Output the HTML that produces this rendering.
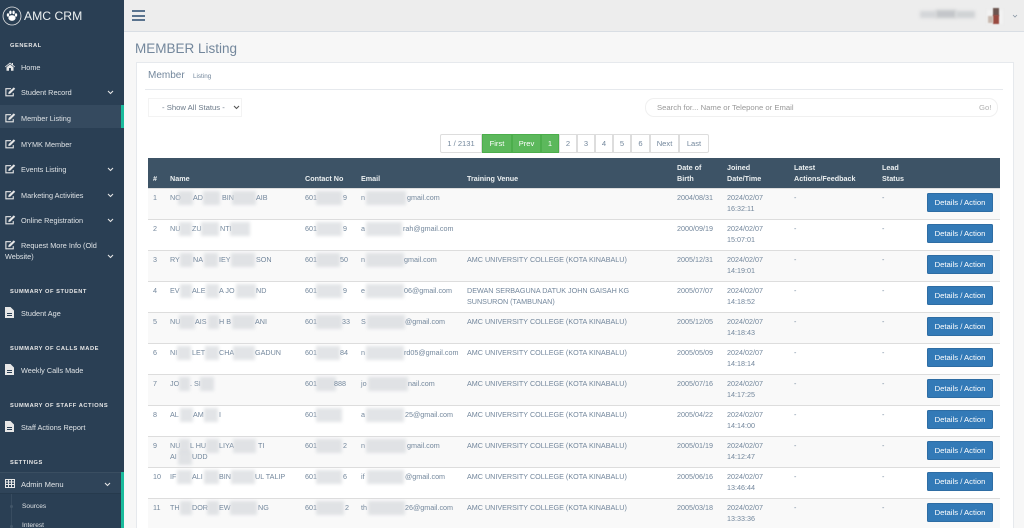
<!DOCTYPE html>
<html><head><meta charset="utf-8"><title>AMC CRM</title>
<style>
html,body{margin:0;padding:0;width:1024px;height:528px;overflow:hidden;background:#f7f7f7;font-family:"Liberation Sans",sans-serif;color:#73879c}
*{box-sizing:border-box}
#w{position:absolute;left:0;top:0;width:1024px;height:528px;overflow:hidden;filter:blur(.35px)}
.a,.a *{position:absolute;white-space:nowrap}
#side{position:absolute;left:0;top:0;width:124px;height:528px;background:#2a3f54;overflow:hidden}
#side .t{color:#dfe3e6;font-size:7.3px;line-height:10px;left:21px}
#side .h{color:#e7e7e7;font-size:5.7px;font-weight:bold;letter-spacing:.55px;line-height:8px;left:10px}
.r{position:absolute;left:148px;width:852px;height:31px;border-top:1px solid #ddd;font-size:7.2px;line-height:10.7px;color:#73879c}
.r span{position:absolute;top:4px;white-space:nowrap}
.r .l2{top:15px}
.r i{position:absolute;top:2px;height:14px;background:#d6d9dd;filter:blur(1.5px);opacity:.7}
.r b{position:absolute;left:779px;top:4px;width:66px;height:19px;background:#337ab7;border:1px solid #2e6da4;border-radius:1.5px;color:#fff;font-weight:normal;font-size:7.7px;line-height:17px;text-align:center}
.o{background:#f9f9f9}.e{background:#fff}
.p{position:absolute;top:134px;height:19px;border:1px solid #ddd;margin-left:-1px;background:#fff;color:#73879c;font-size:7.6px;line-height:17px;text-align:center}
.g{background:#5cb85c;border-color:#4cae4c;color:#fff}
.th{position:absolute;color:#ecf0f1;font-size:7.2px;font-weight:bold;line-height:11px;white-space:nowrap}
</style></head><body>
<div id="w">

<div id="side">
<svg style="position:absolute;left:2px;top:6px" width="20" height="20" viewBox="0 0 20 20"><circle cx="10" cy="10" r="9" fill="none" stroke="#e7e7e7" stroke-width=".8"/><ellipse cx="10" cy="12" rx="3.6" ry="2.9" fill="#fff"/><ellipse cx="6" cy="9" rx="1.2" ry="1.7" fill="#fff"/><ellipse cx="14" cy="9" rx="1.2" ry="1.7" fill="#fff"/><ellipse cx="8.4" cy="6.4" rx="1.2" ry="1.8" fill="#fff"/><ellipse cx="11.6" cy="6.4" rx="1.2" ry="1.8" fill="#fff"/></svg>
<div class="a" style="left:0;top:0;width:124px;height:528px">
<span style="left:24px;top:8px;font-size:12.2px;line-height:16px;color:#ecf0f1">AMC CRM</span>
<span class="h" style="top:42px">GENERAL</span>

<div style="left:0;top:105px;width:124px;height:23px;background:#354a5f"></div>
<div style="left:121px;top:105px;width:3px;height:23px;background:#1abb9c"></div>

<svg style="left:5px;top:62px" width="10" height="9" viewBox="0 0 10 9"><path d="M5 .5 0 4.6l.5.6L5 1.6l4.500 3.600.5-.6-2-1.600V1H7v1L5 .5ZM1.500 5.200V8.700H4V6h2v2.700h2.500V5.200L5 2.400Z" fill="#e7e7e7"/></svg>
<span class="t" style="top:63px">Home</span>

<svg style="left:5px;top:87px" width="11" height="10" viewBox="0 0 10 9"><path d="M7.500 5.500V8H.8V1.500H5.500" fill="none" stroke="#e7e7e7" stroke-width="1"/><path d="M3.300 4.500 8 .3l1.300 1.200L4.800 6 3 6.400Z" fill="#e7e7e7"/></svg>
<span class="t" style="top:88px">Student Record</span>
<svg style="left:107px;top:90px" width="7" height="5" viewBox="0 0 7 5"><path d="M1 1l2.500 2.500L6 1" fill="none" stroke="#e7e7e7" stroke-width="1.100"/></svg>

<svg style="left:5px;top:113px" width="11" height="10" viewBox="0 0 10 9"><path d="M7.500 5.500V8H.8V1.500H5.500" fill="none" stroke="#e7e7e7" stroke-width="1"/><path d="M3.300 4.500 8 .3l1.300 1.200L4.800 6 3 6.400Z" fill="#e7e7e7"/></svg>
<span class="t" style="top:114px">Member Listing</span>

<svg style="left:5px;top:139px" width="11" height="10" viewBox="0 0 10 9"><path d="M7.500 5.500V8H.8V1.500H5.500" fill="none" stroke="#e7e7e7" stroke-width="1"/><path d="M3.300 4.500 8 .3l1.300 1.200L4.800 6 3 6.400Z" fill="#e7e7e7"/></svg>
<span class="t" style="top:140px">MYMK Member</span>

<svg style="left:5px;top:164px" width="11" height="10" viewBox="0 0 10 9"><path d="M7.500 5.500V8H.8V1.500H5.500" fill="none" stroke="#e7e7e7" stroke-width="1"/><path d="M3.300 4.500 8 .3l1.300 1.200L4.800 6 3 6.400Z" fill="#e7e7e7"/></svg>
<span class="t" style="top:165px">Events Listing</span>
<svg style="left:107px;top:167px" width="7" height="5" viewBox="0 0 7 5"><path d="M1 1l2.500 2.500L6 1" fill="none" stroke="#e7e7e7" stroke-width="1.100"/></svg>

<svg style="left:5px;top:190px" width="11" height="10" viewBox="0 0 10 9"><path d="M7.500 5.500V8H.8V1.500H5.500" fill="none" stroke="#e7e7e7" stroke-width="1"/><path d="M3.300 4.500 8 .3l1.300 1.200L4.800 6 3 6.400Z" fill="#e7e7e7"/></svg>
<span class="t" style="top:191px">Marketing Activities</span>
<svg style="left:107px;top:193px" width="7" height="5" viewBox="0 0 7 5"><path d="M1 1l2.500 2.500L6 1" fill="none" stroke="#e7e7e7" stroke-width="1.100"/></svg>

<svg style="left:5px;top:215px" width="11" height="10" viewBox="0 0 10 9"><path d="M7.500 5.500V8H.8V1.500H5.500" fill="none" stroke="#e7e7e7" stroke-width="1"/><path d="M3.300 4.500 8 .3l1.300 1.200L4.800 6 3 6.400Z" fill="#e7e7e7"/></svg>
<span class="t" style="top:216px">Online Registration</span>
<svg style="left:107px;top:218px" width="7" height="5" viewBox="0 0 7 5"><path d="M1 1l2.500 2.500L6 1" fill="none" stroke="#e7e7e7" stroke-width="1.100"/></svg>

<svg style="left:5px;top:240px" width="11" height="10" viewBox="0 0 10 9"><path d="M7.500 5.500V8H.8V1.500H5.500" fill="none" stroke="#e7e7e7" stroke-width="1"/><path d="M3.300 4.500 8 .3l1.300 1.200L4.800 6 3 6.400Z" fill="#e7e7e7"/></svg>
<span class="t" style="top:241px">Request More Info (Old</span>
<span class="t" style="left:5px;top:252px">Website)</span>
<svg style="left:107px;top:254px" width="7" height="5" viewBox="0 0 7 5"><path d="M1 1l2.500 2.500L6 1" fill="none" stroke="#e7e7e7" stroke-width="1.100"/></svg>

<span class="h" style="top:288px">SUMMARY OF STUDENT</span>
<svg style="left:5px;top:307px" width="9" height="11" viewBox="0 0 9 11"><path d="M0 0h5.500L9 3.500V11H0ZM2 6h5v1H2ZM2 8h5v1H2Z" fill="#e7e7e7" fill-rule="evenodd"/></svg>
<span class="t" style="top:309px">Student Age</span>

<span class="h" style="top:345px">SUMMARY OF CALLS MADE</span>
<svg style="left:5px;top:364px" width="9" height="11" viewBox="0 0 9 11"><path d="M0 0h5.500L9 3.500V11H0ZM2 6h5v1H2ZM2 8h5v1H2Z" fill="#e7e7e7" fill-rule="evenodd"/></svg>
<span class="t" style="top:366px">Weekly Calls Made</span>

<span class="h" style="top:402px">SUMMARY OF STAFF ACTIONS</span>
<svg style="left:5px;top:421px" width="9" height="11" viewBox="0 0 9 11"><path d="M0 0h5.500L9 3.500V11H0ZM2 6h5v1H2ZM2 8h5v1H2Z" fill="#e7e7e7" fill-rule="evenodd"/></svg>
<span class="t" style="top:423px">Staff Actions Report</span>

<span class="h" style="top:459px">SETTINGS</span>

<div style="left:0;top:472px;width:124px;height:22px;background:#2f4459;border-top:1px solid #3a4e61;border-bottom:1px solid #263a4d"></div>
<div style="left:121px;top:472px;width:3px;height:56px;background:#1abb9c"></div>
<svg style="left:5px;top:479px" width="10" height="9" viewBox="0 0 10 9"><path d="M.5.500h9v8h-9ZM.5 3h9M.5 5.500h9M3.500.5v8M6.500.5v8" fill="none" stroke="#e7e7e7" stroke-width="1"/></svg>
<span class="t" style="top:480px;font-size:7.6px">Admin Menu</span>
<svg style="left:104px;top:482px" width="7" height="5" viewBox="0 0 7 5"><path d="M1 1l2.500 2.500L6 1" fill="none" stroke="#e7e7e7" stroke-width="1.100"/></svg>
<div style="left:11px;top:494px;width:1px;height:34px;background:#384c60"></div>
<div style="left:10px;top:505px;width:3px;height:3px;border-radius:50%;background:#425668"></div>
<div style="left:10px;top:525px;width:3px;height:3px;border-radius:50%;background:#425668"></div>
<span class="t" style="left:22px;top:502px;font-size:6.6px">Sources</span>
<span class="t" style="left:22px;top:521px;font-size:6.6px">Interest</span>
</div>
</div>

<div style="position:absolute;left:124px;top:0;width:900px;height:32px;background:#ededed;border-bottom:1px solid #d9dee4"></div>
<div style="position:absolute;left:132px;top:10px;width:13px;height:2.200px;background:#5a738e"></div>
<div style="position:absolute;left:132px;top:14.500px;width:13px;height:2.200px;background:#5a738e"></div>
<div style="position:absolute;left:132px;top:19px;width:13px;height:2.200px;background:#5a738e"></div>
<div style="position:absolute;left:920px;top:11px;width:16px;height:7px;background:#d3d5d8;filter:blur(1.500px)"></div>
<div style="position:absolute;left:936px;top:10px;width:20px;height:8px;background:#c3c6c9;filter:blur(1.500px)"></div>
<div style="position:absolute;left:956px;top:11px;width:19px;height:7px;background:#cfd2d4;filter:blur(1.500px)"></div>
<div style="position:absolute;left:987px;top:10px;width:16px;height:14px;background:#f2f2f2;filter:blur(1px)"></div>
<div style="position:absolute;left:993px;top:8px;width:6px;height:8px;background:#6c5550;filter:blur(.6px)"></div>
<div style="position:absolute;left:993px;top:15px;width:6px;height:9px;background:#99493f;filter:blur(.6px)"></div>
<div style="position:absolute;left:988px;top:16px;width:5px;height:7px;background:#c8b8ae;filter:blur(.8px)"></div>
<svg style="position:absolute;left:1012px;top:14px" width="6" height="4" viewBox="0 0 6 4"><path d="M1 1l2 2 2-2" fill="none" stroke="#8a97a5" stroke-width=".8"/></svg>

<div style="position:absolute;left:135px;top:40px;font-size:13.500px;line-height:18px;color:#73879c">MEMBER Listing</div>

<div style="position:absolute;left:136px;top:62px;width:878px;height:470px;background:#fff;border:1px solid #e6e9ed"></div>
<div style="position:absolute;left:148px;top:70px;font-size:10px;line-height:12px;color:#73879c">Member</div>
<div style="position:absolute;left:193px;top:72px;font-size:6.3px;line-height:9px;color:#73879c">Listing</div>
<div style="position:absolute;left:145px;top:89px;width:858px;height:1px;background:#e6e9ed"></div>

<div style="position:absolute;left:148px;top:98px;width:94px;height:19px;background:#fff;border:1px solid #f3f3f3;font-size:7.700px;line-height:17px;color:#6c7a89;padding-left:13px">- Show All Status -</div>
<svg style="position:absolute;left:233px;top:105px" width="7" height="5" viewBox="0 0 7 5"><path d="M1 1l2.500 2.500L6 1" fill="none" stroke="#555" stroke-width="1.100"/></svg>

<div style="position:absolute;left:645px;top:98px;width:353px;height:19px;background:#fff;border:1px solid #f0f0f0;border-radius:9px;font-size:7.700px;line-height:17px;color:#999;padding-left:11px">Search for... Name or Telepone or Email</div>
<div style="position:absolute;left:979px;top:98px;font-size:7.700px;line-height:19px;color:#b0b0b0">Go!</div>

<div class="p" style="left:441px;width:42px;border-radius:2px 0 0 2px">1 / 2131</div>
<div class="p g" style="left:483px;width:30px">First</div>
<div class="p g" style="left:513px;width:29px">Prev</div>
<div class="p g" style="left:542px;width:18px">1</div>
<div class="p" style="left:560px;width:18px">2</div>
<div class="p" style="left:578px;width:18px">3</div>
<div class="p" style="left:596px;width:18px">4</div>
<div class="p" style="left:614px;width:18px">5</div>
<div class="p" style="left:632px;width:19px">6</div>
<div class="p" style="left:651px;width:29px">Next</div>
<div class="p" style="left:680px;width:30px;border-radius:0 2px 2px 0">Last</div>

<div style="position:absolute;left:148px;top:158px;width:852px;height:30px;background:#3d5366"></div>
<div class="th" style="left:153px;top:173px">#</div>
<div class="th" style="left:170px;top:173px">Name</div>
<div class="th" style="left:305px;top:173px">Contact No</div>
<div class="th" style="left:361px;top:173px">Email</div>
<div class="th" style="left:467px;top:173px">Training Venue</div>
<div class="th" style="left:677px;top:162px">Date of<br>Birth</div>
<div class="th" style="left:727px;top:162px">Joined<br>Date/Time</div>
<div class="th" style="left:794px;top:162px">Latest<br>Actions/Feedback</div>
<div class="th" style="left:882px;top:162px">Lead<br>Status</div>

<div class="r o" style="top:188px"><span style="left:5px">1</span><span style="left:22px">NO</span><i style="left:30px;width:15px"></i><span style="left:45px">AD</span><i style="left:55px;width:17px"></i><span style="left:74px">BIN</span><i style="left:84px;width:24px"></i><span style="left:108px">AIB</span><span style="left:157px">601</span><i style="left:168px;width:26px"></i><span style="left:195px">9</span><span style="left:213px">n</span><i style="left:218px;width:40px"></i><span style="left:259px">gmail.com</span><span style="left:529px">2004/08/31</span><span style="left:579px">2024/02/07</span><span class="l2" style="left:579px">16:32:11</span><span style="left:646px">-</span><span style="left:734px">-</span><b>Details / Action</b></div>

<div class="r e" style="top:219px"><span style="left:5px">2</span><span style="left:22px">NU</span><i style="left:31px;width:13px"></i><span style="left:44px">ZU</span><i style="left:53px;width:18px"></i><span style="left:72px">NTI</span><i style="left:82px;width:20px"></i><span style="left:157px">601</span><i style="left:168px;width:26px"></i><span style="left:195px">9</span><span style="left:213px">a</span><i style="left:218px;width:36px"></i><span style="left:255px">rah@gmail.com</span><span style="left:529px">2000/09/19</span><span style="left:579px">2024/02/07</span><span class="l2" style="left:579px">15:07:01</span><span style="left:646px">-</span><span style="left:734px">-</span><b>Details / Action</b></div>

<div class="r o" style="top:250px"><span style="left:5px">3</span><span style="left:22px">RY</span><i style="left:32px;width:13px"></i><span style="left:45px">NA</span><i style="left:56px;width:14px"></i><span style="left:71px">IEY</span><i style="left:83px;width:24px"></i><span style="left:108px">SON</span><span style="left:157px">601</span><i style="left:168px;width:24px"></i><span style="left:192px">50</span><span style="left:213px">n</span><i style="left:218px;width:38px"></i><span style="left:256px">gmail.com</span><span style="left:319px">AMC UNIVERSITY COLLEGE (KOTA KINABALU)</span><span style="left:529px">2005/12/31</span><span style="left:579px">2024/02/07</span><span class="l2" style="left:579px">14:19:01</span><span style="left:646px">-</span><span style="left:734px">-</span><b>Details / Action</b></div>

<div class="r e" style="top:281px"><span style="left:5px">4</span><span style="left:22px">EV</span><i style="left:32px;width:12px"></i><span style="left:44px">ALE</span><i style="left:58px;width:13px"></i><span style="left:71px">A JO</span><i style="left:88px;width:20px"></i><span style="left:108px">ND</span><span style="left:157px">601</span><i style="left:168px;width:26px"></i><span style="left:195px">9</span><span style="left:213px">e</span><i style="left:218px;width:38px"></i><span style="left:256px">06@gmail.com</span><span style="left:319px">DEWAN SERBAGUNA DATUK JOHN GAISAH KG</span><span class="l2" style="left:319px">SUNSURON (TAMBUNAN)</span><span style="left:529px">2005/07/07</span><span style="left:579px">2024/02/07</span><span class="l2" style="left:579px">14:18:52</span><span style="left:646px">-</span><span style="left:734px">-</span><b>Details / Action</b></div>

<div class="r o" style="top:312px"><span style="left:5px">5</span><span style="left:22px">NU</span><i style="left:31px;width:16px"></i><span style="left:47px">AIS</span><i style="left:60px;width:11px"></i><span style="left:71px">H B</span><i style="left:84px;width:23px"></i><span style="left:107px">ANI</span><span style="left:157px">601</span><i style="left:168px;width:26px"></i><span style="left:194px">33</span><span style="left:213px">S</span><i style="left:219px;width:38px"></i><span style="left:257px">@gmail.com</span><span style="left:319px">AMC UNIVERSITY COLLEGE (KOTA KINABALU)</span><span style="left:529px">2005/12/05</span><span style="left:579px">2024/02/07</span><span class="l2" style="left:579px">14:18:43</span><span style="left:646px">-</span><span style="left:734px">-</span><b>Details / Action</b></div>

<div class="r e" style="top:343px"><span style="left:5px">6</span><span style="left:22px">NI</span><i style="left:29px;width:14px"></i><span style="left:44px">LET</span><i style="left:57px;width:14px"></i><span style="left:71px">CHA</span><i style="left:85px;width:22px"></i><span style="left:107px">GADUN</span><span style="left:157px">601</span><i style="left:168px;width:24px"></i><span style="left:192px">84</span><span style="left:213px">n</span><i style="left:218px;width:38px"></i><span style="left:256px">rd05@gmail.com</span><span style="left:319px">AMC UNIVERSITY COLLEGE (KOTA KINABALU)</span><span style="left:529px">2005/05/09</span><span style="left:579px">2024/02/07</span><span class="l2" style="left:579px">14:18:14</span><span style="left:646px">-</span><span style="left:734px">-</span><b>Details / Action</b></div>

<div class="r o" style="top:374px"><span style="left:5px">7</span><span style="left:22px">JO</span><i style="left:31px;width:11px"></i><span style="left:42px">. SI</span><i style="left:52px;width:14px"></i><span style="left:157px">601</span><i style="left:168px;width:20px"></i><span style="left:186px">888</span><span style="left:213px">jo</span><i style="left:220px;width:40px"></i><span style="left:260px">nail.com</span><span style="left:319px">AMC UNIVERSITY COLLEGE (KOTA KINABALU)</span><span style="left:529px">2005/07/16</span><span style="left:579px">2024/02/07</span><span class="l2" style="left:579px">14:17:25</span><span style="left:646px">-</span><span style="left:734px">-</span><b>Details / Action</b></div>

<div class="r e" style="top:405px"><span style="left:5px">8</span><span style="left:22px">AL</span><i style="left:32px;width:13px"></i><span style="left:45px">AM</span><i style="left:56px;width:14px"></i><span style="left:71px">I</span><span style="left:157px">601</span><i style="left:168px;width:26px"></i><span style="left:213px">a</span><i style="left:218px;width:38px"></i><span style="left:257px">25@gmail.com</span><span style="left:319px">AMC UNIVERSITY COLLEGE (KOTA KINABALU)</span><span style="left:529px">2005/04/22</span><span style="left:579px">2024/02/07</span><span class="l2" style="left:579px">14:14:00</span><span style="left:646px">-</span><span style="left:734px">-</span><b>Details / Action</b></div>

<div class="r o" style="top:436px"><span style="left:5px">9</span><span style="left:22px">NU</span><i style="left:31px;width:11px"></i><span style="left:42px">L HU</span><i style="left:58px;width:13px"></i><span style="left:71px">LIYA</span><i style="left:85px;width:23px"></i><span style="left:110px">TI</span><span class="l2" style="left:22px">AI</span><i style="left:30px;top:14px;width:14px"></i><span class="l2" style="left:44px">UDD</span><span style="left:157px">601</span><i style="left:168px;width:26px"></i><span style="left:195px">2</span><span style="left:213px">n</span><i style="left:218px;width:40px"></i><span style="left:259px">gmail.com</span><span style="left:319px">AMC UNIVERSITY COLLEGE (KOTA KINABALU)</span><span style="left:529px">2005/01/19</span><span style="left:579px">2024/02/07</span><span class="l2" style="left:579px">14:12:47</span><span style="left:646px">-</span><span style="left:734px">-</span><b>Details / Action</b></div>

<div class="r e" style="top:467px"><span style="left:5px">10</span><span style="left:22px">IF</span><i style="left:29px;width:15px"></i><span style="left:44px">ALI</span><i style="left:56px;width:15px"></i><span style="left:71px">BIN</span><i style="left:83px;width:24px"></i><span style="left:107px">UL TALIP</span><span style="left:157px">601</span><i style="left:168px;width:26px"></i><span style="left:195px">6</span><span style="left:213px">if</span><i style="left:219px;width:37px"></i><span style="left:257px">@gmail.com</span><span style="left:319px">AMC UNIVERSITY COLLEGE (KOTA KINABALU)</span><span style="left:529px">2005/06/16</span><span style="left:579px">2024/02/07</span><span class="l2" style="left:579px">13:46:44</span><span style="left:646px">-</span><span style="left:734px">-</span><b>Details / Action</b></div>

<div class="r o" style="top:498px;height:40px"><span style="left:5px">11</span><span style="left:22px">TH</span><i style="left:32px;width:12px"></i><span style="left:44px">DOR</span><i style="left:59px;width:12px"></i><span style="left:71px">EW</span><i style="left:82px;width:27px"></i><span style="left:110px">NG</span><span style="left:157px">601</span><i style="left:168px;width:28px"></i><span style="left:197px">2</span><span style="left:213px">th</span><i style="left:220px;width:37px"></i><span style="left:257px">26@gmail.com</span><span style="left:319px">AMC UNIVERSITY COLLEGE (KOTA KINABALU)</span><span style="left:529px">2005/03/18</span><span style="left:579px">2024/02/07</span><span class="l2" style="left:579px">13:33:36</span><span style="left:646px">-</span><span style="left:734px">-</span><b>Details / Action</b></div>

</div>
</body></html>
